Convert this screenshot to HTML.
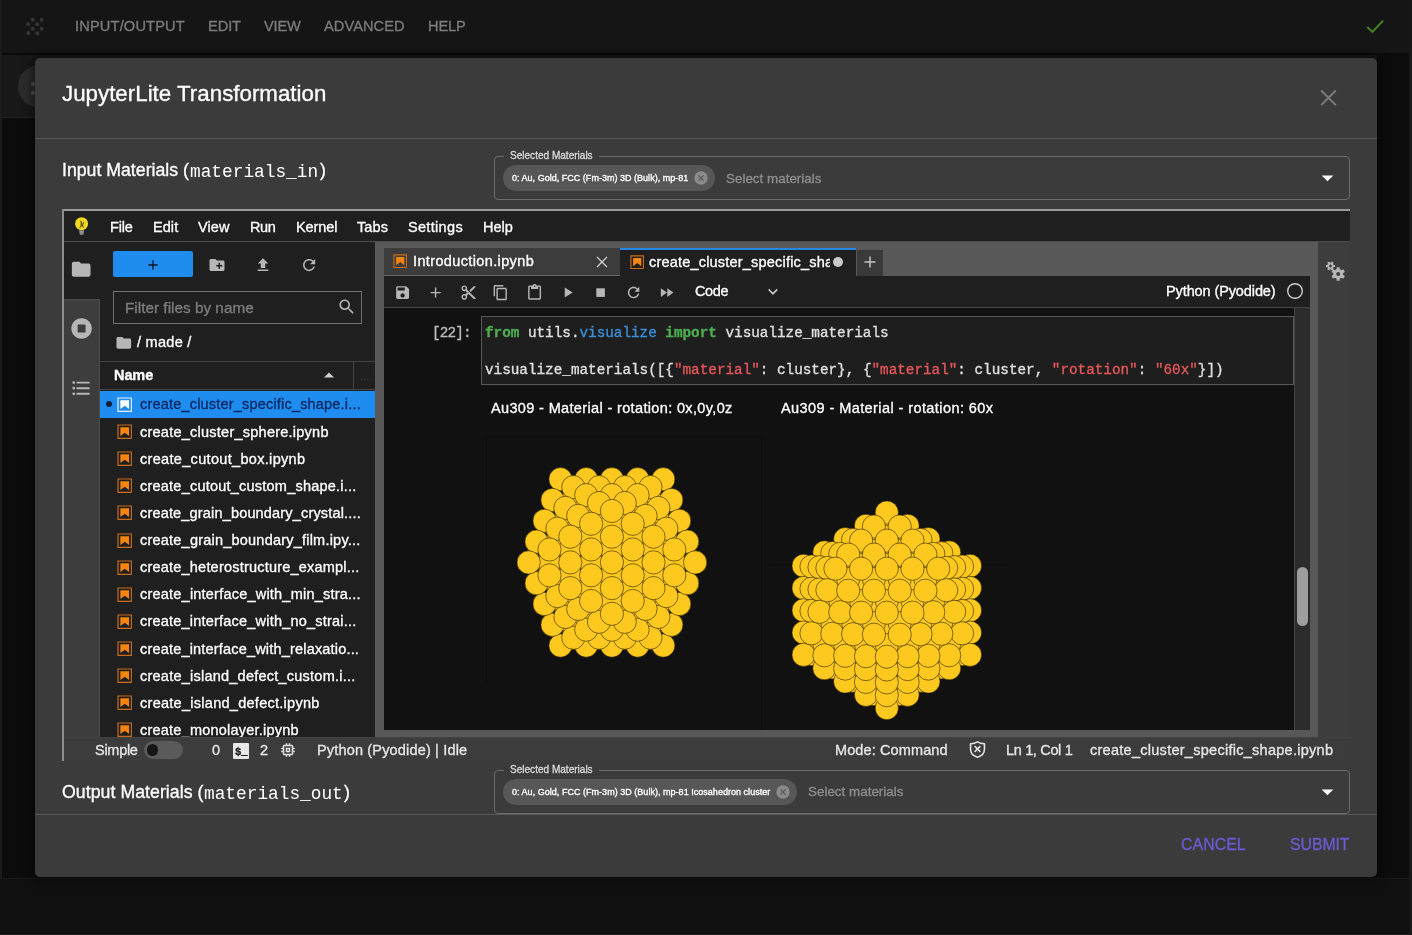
<!DOCTYPE html>
<html><head><meta charset="utf-8"><title>JupyterLite Transformation</title>
<style>
*{box-sizing:border-box;margin:0;padding:0}
html,body{width:1412px;height:935px;overflow:hidden;background:#0c0c0c;font-family:"Liberation Sans",sans-serif}
.a{position:absolute}
.t{position:absolute;white-space:pre;line-height:1;will-change:transform;-webkit-text-stroke:.32px}
svg{position:absolute;overflow:visible}
.au circle{fill:#fdc91f;stroke:#1a1400;stroke-width:.55}

</style></head><body>
<div class="a" style="left:0;top:0;width:1412px;height:53px;background:#151515"></div>
<div class="a" style="left:0;top:53px;width:1412px;height:2px;background:#0a0a0a"></div>
<div class="a" style="left:0;top:55px;width:1377px;height:62px;background:#181818"></div>
<div class="a" style="left:0;top:117px;width:36px;height:1px;background:#232323"></div>
<div class="a" style="left:0;top:0;width:1.500px;height:935px;background:#1b1b1b"></div>
<div class="a" style="left:0;top:878px;width:1412px;height:57px;background:#101010;border-top:1px solid #191919;border-bottom:1px solid #1e1e1e"></div>
<div class="a" style="left:1409px;top:0;width:3px;height:935px;background:#181818"></div>
<div class="a" style="left:18px;top:65px;width:43px;height:43px;border-radius:50%;background:#2b2b2b"></div>
<div class="a" style="left:31px;top:82px;width:4px;height:4px;border-radius:50%;background:#555"></div>
<div class="a" style="left:31px;top:91px;width:4px;height:4px;border-radius:50%;background:#555"></div>
<svg style="left:0;top:0" width="60" height="53"><circle cx="32.7" cy="19.7" r="2" fill="#363636"/><circle cx="41.7" cy="19.7" r="2" fill="#363636"/><circle cx="28.3" cy="24.2" r="2" fill="#363636"/><circle cx="37.1" cy="24.2" r="2" fill="#363636"/><circle cx="32.7" cy="28.8" r="2" fill="#363636"/><circle cx="41.7" cy="28.8" r="2" fill="#363636"/><circle cx="28.3" cy="33" r="2" fill="#363636"/><circle cx="37.3" cy="33.2" r="2" fill="#363636"/></svg>
<div class="t" style="left:74.8px;top:18.9px;font-size:14.6px;color:#7c7c7c;letter-spacing:0.170px;">INPUT/OUTPUT</div>
<div class="t" style="left:207.7px;top:18.9px;font-size:14.6px;color:#7c7c7c;letter-spacing:-0.071px;">EDIT</div>
<div class="t" style="left:264.1px;top:18.9px;font-size:14.6px;color:#7c7c7c;letter-spacing:-0.142px;">VIEW</div>
<div class="t" style="left:324.0px;top:18.9px;font-size:14.6px;color:#7c7c7c;letter-spacing:0.078px;">ADVANCED</div>
<div class="t" style="left:427.7px;top:18.9px;font-size:14.6px;color:#7c7c7c;letter-spacing:-0.121px;">HELP</div>
<svg style="left:1360px;top:14px" width="30" height="24"><path d="M7.3 13 L12.4 17.9 L23.1 6.6" fill="none" stroke="#41851f" stroke-width="2"/></svg>
<div class="a" style="left:35px;top:58px;width:1342px;height:819px;background:#3b3b3b;border-radius:5px;box-shadow:0 0 10px 3px rgba(0,0,0,.5)"></div>
<div class="a" style="left:35px;top:138px;width:1342px;height:1px;background:#565656"></div>
<div class="a" style="left:35px;top:814px;width:1342px;height:1px;background:#565656"></div>
<div class="t" style="left:61.6px;top:83.1px;font-size:22.3px;color:#fff;letter-spacing:0.016px;">JupyterLite Transformation</div>
<svg style="left:1318px;top:88px" width="20" height="20"><path d="M3.2 2.5 L17.8 17.1 M17.8 2.5 L3.2 17.1" fill="none" stroke="#7b7b7b" stroke-width="2"/></svg>
<div class="t" style="left:1180.5px;top:836.8px;font-size:15.8px;color:#6b5bd2;letter-spacing:0.110px;">CANCEL</div>
<div class="t" style="left:1290.0px;top:836.8px;font-size:15.8px;color:#6b5bd2;letter-spacing:-0.034px;">SUBMIT</div>
<div class="a" style="left:494px;top:156px;width:856px;height:44px;border:1px solid #6c6c6c;border-radius:4px"></div>
<div class="a" style="left:504px;top:154px;width:95px;height:5px;background:#3b3b3b"></div>
<div class="t" style="left:509.6px;top:150.7px;font-size:10.05px;color:#d9d9d9;">Selected Materials</div>
<div class="a" style="left:503px;top:165px;width:212px;height:26px;border-radius:13px;background:#575757"></div>
<div class="t" style="left:511.7px;top:173.8px;font-size:9px;color:#fff;letter-spacing:0.019px;">0: Au, Gold, FCC (Fm-3m) 3D (Bulk), mp-81</div>
<svg style="left:694.4px;top:171px" width="14" height="14"><circle cx="7" cy="7" r="6.7" fill="#8b8b8b"/><path d="M4.4 4.4 L9.6 9.6 M9.6 4.4 L4.4 9.6" stroke="#575757" stroke-width="1.3" fill="none"/></svg>
<div class="t" style="left:726.0px;top:171.7px;font-size:13.3px;color:#8f8f8f;letter-spacing:0.058px;">Select materials</div>
<svg style="left:1321px;top:175px" width="13" height="7"><path d="M0.7 0.4 L12.3 0.4 L6.5 6.2 Z" fill="#fff"/></svg>
<div class="t" style="left:62.4px;top:162.1px;font-size:17.7px;color:#fff;letter-spacing:0.005px;">Input Materials (</div>
<div class="t" style="left:190.3px;top:164.2px;font-size:17.75px;color:#fff;font-family:'Liberation Mono',monospace;letter-spacing:0.032px;-webkit-text-stroke:0;">materials_in</div>
<div class="t" style="left:319.7px;top:162.1px;font-size:17.7px;color:#fff;">)</div>
<div class="a" style="left:494px;top:770px;width:856px;height:44px;border:1px solid #6c6c6c;border-radius:4px"></div>
<div class="a" style="left:504px;top:768px;width:95px;height:5px;background:#3b3b3b"></div>
<div class="t" style="left:509.6px;top:764.7px;font-size:10.05px;color:#d9d9d9;">Selected Materials</div>
<div class="a" style="left:503px;top:779px;width:294.20000000000005px;height:26px;border-radius:13px;background:#575757"></div>
<div class="t" style="left:511.7px;top:787.8px;font-size:9px;color:#fff;letter-spacing:0.028px;">0: Au, Gold, FCC (Fm-3m) 3D (Bulk), mp-81 Icosahedron cluster</div>
<svg style="left:776.2px;top:785px" width="14" height="14"><circle cx="7" cy="7" r="6.7" fill="#8b8b8b"/><path d="M4.4 4.4 L9.6 9.6 M9.6 4.4 L4.4 9.6" stroke="#575757" stroke-width="1.3" fill="none"/></svg>
<div class="t" style="left:807.7px;top:785.0px;font-size:13.3px;color:#8f8f8f;letter-spacing:0.058px;">Select materials</div>
<svg style="left:1321px;top:789px" width="13" height="7"><path d="M0.7 0.4 L12.3 0.4 L6.5 6.2 Z" fill="#fff"/></svg>
<div class="t" style="left:61.8px;top:783.7px;font-size:17.7px;color:#fff;letter-spacing:0.053px;">Output Materials (</div>
<div class="t" style="left:204.1px;top:785.8px;font-size:17.75px;color:#fff;font-family:'Liberation Mono',monospace;letter-spacing:0.025px;-webkit-text-stroke:0;">materials_out</div>
<div class="t" style="left:344.1px;top:783.7px;font-size:17.7px;color:#fff;">)</div>
<div class="a" style="left:62px;top:209px;width:1288px;height:2px;background:#9a9a9a;"></div>
<div class="a" style="left:62px;top:209px;width:2px;height:552px;background:#8c8c8c;"></div>
<div class="a" style="left:64px;top:211px;width:1286px;height:30px;background:#1f1f1f;"></div>
<div class="a" style="left:64px;top:241px;width:1286px;height:1px;background:#4d4d4d;"></div>
<div class="a" style="left:64px;top:242px;width:36px;height:495px;background:#3d3d3d;"></div>
<div class="a" style="left:64px;top:242px;width:36px;height:57px;background:#1f1f1f;"></div>
<div class="a" style="left:64px;top:299px;width:36px;height:1px;background:#4c4c4c;"></div>
<div class="a" style="left:99px;top:300px;width:1px;height:437px;background:#4c4c4c;"></div>
<div class="a" style="left:100px;top:242px;width:275px;height:495px;background:#1f1f1f;"></div>
<div class="a" style="left:375px;top:242px;width:943px;height:495px;background:#585858;"></div>
<div class="a" style="left:1318px;top:242px;width:32px;height:495px;background:#3d3d3d;"></div>
<div class="a" style="left:64px;top:737px;width:1286px;height:24px;background:#3c3c3c;border-top:1px solid #424242"></div>
<div class="t" style="left:110.3px;top:220.1px;font-size:14.5px;color:#fff;letter-spacing:-0.164px;">File</div>
<div class="t" style="left:153.1px;top:220.1px;font-size:14.5px;color:#fff;letter-spacing:0.057px;">Edit</div>
<div class="t" style="left:198.4px;top:220.1px;font-size:14.5px;color:#fff;letter-spacing:0.122px;">View</div>
<div class="t" style="left:250.0px;top:220.1px;font-size:14.5px;color:#fff;letter-spacing:-0.444px;">Run</div>
<div class="t" style="left:295.6px;top:220.1px;font-size:14.5px;color:#fff;letter-spacing:-0.095px;">Kernel</div>
<div class="t" style="left:357.4px;top:220.1px;font-size:14.5px;color:#fff;letter-spacing:0.103px;">Tabs</div>
<div class="t" style="left:408.4px;top:220.1px;font-size:14.5px;color:#fff;letter-spacing:0.319px;">Settings</div>
<div class="t" style="left:483.2px;top:220.1px;font-size:14.5px;color:#fff;letter-spacing:0.021px;">Help</div>
<svg style="left:72px;top:214px" width="20" height="24"><path d="M7 16.300 H12.200 L11.400 20.800 H7.800 Z" fill="#8e8e8e"/><circle cx="9.600" cy="9.700" r="6.500" fill="#efd81d"/><path d="M8.300 7.200 l1 .3 -0.200 4.900 -1.600 1.400 M11.500 8.200 l-1.200 3.800 1.700 1.500" stroke="#3a2e00" stroke-width="1" fill="none"/></svg>
<svg style="left:70.3px;top:258.0px" width="22.4" height="22.4" viewBox="0 0 24 24" ><path d="M10 4H4c-1.1 0-1.99.9-1.99 2L2 18c0 1.1.9 2 2 2h16c1.1 0 2-.9 2-2V8c0-1.1-.9-2-2-2h-8l-2-2z" fill="#b6b6b6"/></svg>
<svg style="left:70.9px;top:318.1px" width="21.2" height="21.2" viewBox="0 0 512 512" ><path fill="#b6b6b6" d="M256 8C119 8 8 119 8 256s111 248 248 248 248-111 248-248S393 8 256 8zm96 328c0 8.800-7.200 16-16 16H176c-8.800 0-16-7.200-16-16V176c0-8.800 7.200-16 16-16h160c8.800 0 16 7.200 16 16v160z"/></svg>
<svg style="left:70.2px;top:376.7px" width="22.4" height="22.4" viewBox="0 0 24 24" ><path fill="#b6b6b6" d="M7,5H21V7H7V5M7,13V11H21V13H7M4,4.500A1.500,1.500 0 0,1 5.500,6A1.500,1.500 0 0,1 4,7.500A1.500,1.500 0 0,1 2.500,6A1.500,1.500 0 0,1 4,4.500M4,10.500A1.500,1.500 0 0,1 5.500,12A1.500,1.500 0 0,1 4,13.500A1.500,1.500 0 0,1 2.500,12A1.500,1.500 0 0,1 4,10.500M7,19V17H21V19H7M4,16.500A1.500,1.500 0 0,1 5.500,18A1.500,1.500 0 0,1 4,19.500A1.500,1.500 0 0,1 2.500,18A1.500,1.500 0 0,1 4,16.500Z"/></svg>
<div class="a" style="left:113px;top:251px;width:80px;height:26px;background:#1f8cf0;border-radius:2px"></div>
<svg style="left:145.1px;top:256.8px" width="16" height="16" viewBox="0 0 24 24" ><path d="M19 13h-6v6h-2v-6H5v-2h6V5h2v6h6v2z" fill="#101820"/></svg>
<svg style="left:208.2px;top:255.8px" width="18" height="18" viewBox="0 0 24 24" ><path fill="#b6b6b6" d="M20 6h-8l-2-2H4c-1.110 0-1.990.890-1.990 2L2 18c0 1.110.890 2 2 2h16c1.110 0 2-.890 2-2V8c0-1.110-.890-2-2-2zm-1 8h-3v3h-2v-3h-3v-2h3V9h2v3h3v2z"/></svg>
<svg style="left:253.9px;top:256.1px" width="18" height="18" viewBox="0 0 24 24" ><path fill="#b6b6b6" d="M9 16h6v-6h4l-7-7-7 7h4zm-4 2h14v2H5z"/></svg>
<svg style="left:300.1px;top:255.7px" width="18.2" height="18.2" viewBox="0 0 24 24" ><path fill="#b6b6b6" d="M17.650 6.350C16.200 4.900 14.210 4 12 4c-4.420 0-7.990 3.580-7.990 8s3.570 8 7.990 8c3.730 0 6.840-2.550 7.730-6h-2.080c-.820 2.330-3.040 4-5.650 4-3.310 0-6-2.690-6-6s2.690-6 6-6c1.660 0 3.140.690 4.220 1.780L13 11h7V4l-2.350 2.350z"/></svg>
<div class="a" style="left:113px;top:291px;width:249px;height:33px;border:1px solid #727272;background:#1f1f1f"></div>
<div class="t" style="left:124.6px;top:300.0px;font-size:15.3px;color:#7d7d7d;letter-spacing:0.017px;">Filter files by name</div>
<svg style="left:337.1px;top:297.4px" width="19.5" height="19.5" viewBox="0 0 24 24" ><path fill="#b6b6b6" d="M15.500 14h-.790l-.280-.270C15.410 12.590 16 11.110 16 9.500 16 5.910 13.090 3 9.500 3S3 5.910 3 9.500 5.910 16 9.500 16c1.610 0 3.090-.590 4.230-1.570l.270.280v.790l5 4.990L20.490 19l-4.990-5zm-6 0C7.010 14 5 11.990 5 9.500S7.010 5 9.500 5 14 7.010 14 9.500 11.990 14 9.500 14z"/></svg>
<svg style="left:115.2px;top:333.8px" width="17.6" height="17.6" viewBox="0 0 24 24" ><path d="M10 4H4c-1.1 0-1.99.9-1.99 2L2 18c0 1.1.9 2 2 2h16c1.1 0 2-.9 2-2V8c0-1.1-.9-2-2-2h-8l-2-2z" fill="#b6b6b6"/></svg>
<div class="t" style="left:137.3px;top:335.1px;font-size:14.5px;color:#fff;letter-spacing:0.281px;">/ made /</div>
<div class="a" style="left:100px;top:361px;width:275px;height:1px;background:#434343;"></div>
<div class="a" style="left:100px;top:389px;width:275px;height:1px;background:#434343;"></div>
<div class="a" style="left:353px;top:362px;width:1px;height:27px;background:#434343;"></div>
<div class="t" style="left:113.9px;top:368.3px;font-size:14.5px;color:#fff;font-weight:700;letter-spacing:-0.086px;">Name</div>
<svg style="left:323px;top:371px" width="12" height="8"><path d="M1 6.600 L6 1.600 L11 6.600 Z" fill="#d0d0d0"/></svg>
<div class="t" style="left:360.0px;top:369.9px;font-size:12px;color:#313131;letter-spacing:-0.206px;">...</div>
<div class="a" style="left:100px;top:391px;width:275px;height:27px;background:#1f8cf0;"></div>
<div class="a" style="left:105.7px;top:401.400px;width:6px;height:6px;border-radius:50%;background:#0b1f3d"></div>
<div class="a" style="left:100px;top:391px;width:275px;height:346px;overflow:hidden">
<svg style="left:15.9px;top:4.9px" width="17.400" height="17.400" viewBox="0 0 22 22"><path fill="#e8f2ff" d="M18.700 3.300v15.400H3.300V3.300h15.400m1.500-1.500H1.800v18.300h18.300l.1-18.300z"/><path fill="#fff" d="M16.500 16.500l-5.400-4.300-5.600 4.300v-11h11z"/></svg>
<div class="t" style="left:40.0px;top:6.4px;font-size:14.5px;color:#0b2963;letter-spacing:0.191px;">create_cluster_specific_shape.i...</div>
<svg style="left:15.9px;top:32.0px" width="17.400" height="17.400" viewBox="0 0 22 22"><path fill="#c96d1c" d="M18.700 3.300v15.400H3.300V3.300h15.400m1.500-1.500H1.800v18.300h18.300l.1-18.300z"/><path fill="#f58410" d="M16.500 16.500l-5.400-4.300-5.600 4.300v-11h11z"/></svg>
<div class="t" style="left:40.0px;top:33.5px;font-size:14.5px;color:#fff;letter-spacing:0.243px;">create_cluster_sphere.ipynb</div>
<svg style="left:15.9px;top:59.1px" width="17.400" height="17.400" viewBox="0 0 22 22"><path fill="#c96d1c" d="M18.700 3.300v15.400H3.300V3.300h15.400m1.500-1.500H1.800v18.300h18.300l.1-18.300z"/><path fill="#f58410" d="M16.500 16.500l-5.400-4.300-5.600 4.300v-11h11z"/></svg>
<div class="t" style="left:40.0px;top:60.7px;font-size:14.5px;color:#fff;letter-spacing:0.320px;">create_cutout_box.ipynb</div>
<svg style="left:15.9px;top:86.3px" width="17.400" height="17.400" viewBox="0 0 22 22"><path fill="#c96d1c" d="M18.700 3.300v15.400H3.300V3.300h15.400m1.500-1.500H1.800v18.300h18.300l.1-18.300z"/><path fill="#f58410" d="M16.500 16.500l-5.400-4.300-5.600 4.300v-11h11z"/></svg>
<div class="t" style="left:40.0px;top:87.8px;font-size:14.5px;color:#fff;letter-spacing:0.224px;">create_cutout_custom_shape.i...</div>
<svg style="left:15.9px;top:113.4px" width="17.400" height="17.400" viewBox="0 0 22 22"><path fill="#c96d1c" d="M18.700 3.300v15.400H3.300V3.300h15.400m1.500-1.500H1.800v18.300h18.300l.1-18.300z"/><path fill="#f58410" d="M16.500 16.500l-5.400-4.300-5.600 4.300v-11h11z"/></svg>
<div class="t" style="left:40.0px;top:114.9px;font-size:14.5px;color:#fff;letter-spacing:0.172px;">create_grain_boundary_crystal....</div>
<svg style="left:15.9px;top:140.5px" width="17.400" height="17.400" viewBox="0 0 22 22"><path fill="#c96d1c" d="M18.700 3.300v15.400H3.300V3.300h15.400m1.500-1.500H1.800v18.300h18.300l.1-18.300z"/><path fill="#f58410" d="M16.500 16.500l-5.400-4.300-5.600 4.300v-11h11z"/></svg>
<div class="t" style="left:40.0px;top:142.0px;font-size:14.5px;color:#fff;letter-spacing:0.218px;">create_grain_boundary_film.ipy...</div>
<svg style="left:15.9px;top:167.6px" width="17.400" height="17.400" viewBox="0 0 22 22"><path fill="#c96d1c" d="M18.700 3.300v15.400H3.300V3.300h15.400m1.500-1.500H1.800v18.300h18.300l.1-18.300z"/><path fill="#f58410" d="M16.500 16.500l-5.400-4.300-5.600 4.300v-11h11z"/></svg>
<div class="t" style="left:40.0px;top:169.1px;font-size:14.5px;color:#fff;letter-spacing:0.210px;">create_heterostructure_exampl...</div>
<svg style="left:15.9px;top:194.7px" width="17.400" height="17.400" viewBox="0 0 22 22"><path fill="#c96d1c" d="M18.700 3.300v15.400H3.300V3.300h15.400m1.500-1.500H1.800v18.300h18.300l.1-18.300z"/><path fill="#f58410" d="M16.500 16.500l-5.400-4.300-5.600 4.300v-11h11z"/></svg>
<div class="t" style="left:40.0px;top:196.3px;font-size:14.5px;color:#fff;letter-spacing:0.216px;">create_interface_with_min_stra...</div>
<svg style="left:15.9px;top:221.9px" width="17.400" height="17.400" viewBox="0 0 22 22"><path fill="#c96d1c" d="M18.700 3.300v15.400H3.300V3.300h15.400m1.500-1.500H1.800v18.300h18.300l.1-18.300z"/><path fill="#f58410" d="M16.500 16.500l-5.400-4.300-5.600 4.300v-11h11z"/></svg>
<div class="t" style="left:40.0px;top:223.4px;font-size:14.5px;color:#fff;letter-spacing:0.210px;">create_interface_with_no_strai...</div>
<svg style="left:15.9px;top:249.0px" width="17.400" height="17.400" viewBox="0 0 22 22"><path fill="#c96d1c" d="M18.700 3.300v15.400H3.300V3.300h15.400m1.500-1.500H1.800v18.300h18.300l.1-18.300z"/><path fill="#f58410" d="M16.500 16.500l-5.400-4.300-5.600 4.300v-11h11z"/></svg>
<div class="t" style="left:40.0px;top:250.5px;font-size:14.5px;color:#fff;letter-spacing:0.185px;">create_interface_with_relaxatio...</div>
<svg style="left:15.9px;top:276.1px" width="17.400" height="17.400" viewBox="0 0 22 22"><path fill="#c96d1c" d="M18.700 3.300v15.400H3.300V3.300h15.400m1.500-1.500H1.800v18.300h18.300l.1-18.300z"/><path fill="#f58410" d="M16.500 16.500l-5.400-4.300-5.600 4.300v-11h11z"/></svg>
<div class="t" style="left:40.0px;top:277.6px;font-size:14.5px;color:#fff;letter-spacing:0.236px;">create_island_defect_custom.i...</div>
<svg style="left:15.9px;top:303.2px" width="17.400" height="17.400" viewBox="0 0 22 22"><path fill="#c96d1c" d="M18.700 3.300v15.400H3.300V3.300h15.400m1.500-1.500H1.800v18.300h18.300l.1-18.300z"/><path fill="#f58410" d="M16.500 16.500l-5.400-4.300-5.600 4.300v-11h11z"/></svg>
<div class="t" style="left:40.0px;top:304.7px;font-size:14.5px;color:#fff;letter-spacing:0.274px;">create_island_defect.ipynb</div>
<svg style="left:15.9px;top:330.3px" width="17.400" height="17.400" viewBox="0 0 22 22"><path fill="#c96d1c" d="M18.700 3.300v15.400H3.300V3.300h15.400m1.500-1.500H1.800v18.300h18.300l.1-18.300z"/><path fill="#f58410" d="M16.500 16.500l-5.400-4.300-5.600 4.300v-11h11z"/></svg>
<div class="t" style="left:40.0px;top:331.9px;font-size:14.5px;color:#fff;letter-spacing:0.220px;">create_monolayer.ipynb</div>
</div>
<div class="a" style="left:384px;top:248px;width:236px;height:28px;background:#3c3c3c;border-bottom:1px solid #6a6a6a"></div>
<div class="a" style="left:620px;top:248px;width:236px;height:28px;background:#1f1f1f;"></div>
<div class="a" style="left:620px;top:248px;width:236px;height:2px;background:#2489e6;"></div>
<div class="a" style="left:856.5px;top:249.5px;width:26.5px;height:26.5px;background:#3a3a3a;"></div>
<svg style="left:392px;top:253px" width="16.400" height="16.400" viewBox="0 0 22 22"><path fill="#c96d1c" d="M18.700 3.300v15.400H3.300V3.300h15.400m1.500-1.500H1.800v18.300h18.300l.1-18.300z"/><path fill="#f58410" d="M16.500 16.500l-5.400-4.300-5.600 4.300v-11h11z"/></svg>
<div class="t" style="left:412.7px;top:254.3px;font-size:14.5px;color:#fff;letter-spacing:0.368px;">Introduction.ipynb</div>
<svg style="left:596px;top:255.500px" width="12" height="12"><path d="M1 1 L11 11 M11 1 L1 11" stroke="#d0d0d0" stroke-width="1.300" fill="none"/></svg>
<svg style="left:628.800px;top:253.600px" width="16.400" height="16.400" viewBox="0 0 22 22"><path fill="#c96d1c" d="M18.700 3.300v15.400H3.300V3.300h15.400m1.500-1.500H1.800v18.300h18.300l.1-18.300z"/><path fill="#f58410" d="M16.500 16.500l-5.400-4.300-5.600 4.300v-11h11z"/></svg>
<div class="a" style="left:649px;top:250px;width:181px;height:25px;overflow:hidden"><div class="t" style="left:0.3px;top:5.4px;font-size:14.5px;color:#fff;letter-spacing:0.196px;">create_cluster_specific_shape.ipynb</div></div>
<div class="a" style="left:833.400px;top:257.200px;width:10px;height:10px;border-radius:50%;background:#c9c9c9"></div>
<svg style="left:864px;top:256px" width="12" height="12"><path d="M6 0.500 V11.500 M0.500 6 H11.500" stroke="#c4c4c4" stroke-width="1.500" fill="none"/></svg>
<div class="a" style="left:384px;top:276px;width:926px;height:31px;background:#1f1f1f;"></div>
<div class="a" style="left:384px;top:307px;width:926px;height:1px;background:#454545;"></div>
<svg style="left:393.8px;top:283.5px" width="17.2" height="17.2" viewBox="0 0 24 24" ><path fill="#b6b6b6" d="M17 3H5c-1.110 0-2 .900-2 2v14c0 1.100.890 2 2 2h14c1.100 0 2-.900 2-2V7l-4-4zm-5 16c-1.660 0-3-1.340-3-3s1.340-3 3-3 3 1.340 3 3-1.340 3-3 3zm3-10H5V5h10v4z"/></svg>
<svg style="left:426.7px;top:283.5px" width="17.2" height="17.2" viewBox="0 0 24 24" ><path fill="#b6b6b6" d="M19 13h-6v6h-2v-6H5v-2h6V5h2v6h6v2z"/></svg>
<svg style="left:459.6px;top:283.5px" width="17.2" height="17.2" viewBox="0 0 24 24" ><path fill="#b6b6b6" d="M9.640 7.640c.230-.500.360-1.050.360-1.640 0-2.210-1.790-4-4-4S2 3.790 2 6s1.790 4 4 4c.590 0 1.140-.130 1.640-.360L10 12l-2.360 2.360C7.140 14.130 6.590 14 6 14c-2.210 0-4 1.790-4 4s1.790 4 4 4 4-1.790 4-4c0-.590-.130-1.140-.360-1.640L12 14l7 7h3v-1L9.640 7.640zM6 8c-1.100 0-2-.890-2-2s.900-2 2-2 2 .890 2 2-.900 2-2 2zm0 12c-1.100 0-2-.890-2-2s.900-2 2-2 2 .890 2 2-.900 2-2 2zm6-7.500c-.280 0-.500-.220-.500-.500s.220-.500.500-.500.500.220.500.500-.220.500-.500.500zM19 3l-6 6 2 2 7-7V3z"/></svg>
<svg style="left:492.3px;top:283.5px" width="17.2" height="17.2" viewBox="0 0 18 18" ><path fill="#b6b6b6" d="M11.900,1H3.200C2.400,1,1.700,1.700,1.700,2.500v10.200h1.500V2.500h8.700V1z M14.100,3.900h-8c-0.800,0-1.500,0.700-1.500,1.500v10.200c0,0.800,0.700,1.500,1.500,1.500h8 c0.800,0,1.500-0.700,1.500-1.500V5.400C15.500,4.600,14.900,3.900,14.100,3.900z M14.100,15.500h-8V5.400h8V15.500z"/></svg>
<svg style="left:525.6px;top:283.5px" width="17.2" height="17.2" viewBox="0 0 24 24" ><path fill="#b6b6b6" d="M19 2h-4.180C14.400.840 13.300 0 12 0c-1.300 0-2.400.840-2.820 2H5c-1.100 0-2 .900-2 2v16c0 1.100.900 2 2 2h14c1.100 0 2-.900 2-2V4c0-1.100-.900-2-2-2zm-7 0c.550 0 1 .450 1 1s-.450 1-1 1-1-.450-1-1 .450-1 1-1zm7 18H5V4h2v3h10V4h2v16z"/></svg>
<svg style="left:559.1px;top:283.5px" width="17.2" height="17.2" viewBox="0 0 24 24" ><path fill="#b6b6b6" d="M8 5v14l11-7z"/></svg>
<svg style="left:591.9px;top:283.5px" width="17.2" height="17.2" viewBox="0 0 24 24" ><path fill="#b6b6b6" d="M6 6h12v12H6z"/></svg>
<svg style="left:625.0px;top:283.5px" width="17.2" height="17.2" viewBox="0 0 18 18" ><path fill="#b6b6b6" d="M9 13.500c-2.490 0-4.500-2.010-4.500-4.500S6.510 4.500 9 4.500c1.240 0 2.360.520 3.170 1.330L10 8h5V3l-1.760 1.760C12.150 3.680 10.660 3 9 3 5.690 3 3.010 5.690 3.010 9S5.690 15 9 15c2.970 0 5.430-2.160 5.900-5h-1.520c-.460 2-2.240 3.500-4.380 3.500z"/></svg>
<svg style="left:657.9px;top:283.5px" width="17.2" height="17.2" viewBox="0 0 24 24" ><path fill="#b6b6b6" d="M4 18l8.500-6L4 6v12zm9-12v12l8.500-6L13 6z"/></svg>
<div class="t" style="left:695.3px;top:284.3px;font-size:14.5px;color:#fff;letter-spacing:-0.392px;">Code</div>
<svg style="left:764.2px;top:282.9px" width="17.8" height="17.8" viewBox="0 0 18 18" ><path fill="#c4c4c4" d="M5.200,5.900L9,9.700l3.800-3.800l1.200,1.200l-4.900,5l-4.900-5L5.200,5.900z"/></svg>
<div class="t" style="left:1165.7px;top:284.3px;font-size:14.5px;color:#fff;letter-spacing:-0.105px;">Python (Pyodide)</div>
<svg style="left:1286px;top:282px" width="18" height="18"><circle cx="9" cy="9" r="7.300" fill="none" stroke="#cfcfcf" stroke-width="1.400"/></svg>
<div class="a" style="left:384px;top:308px;width:910px;height:422px;background:#111;"></div>
<div class="a" style="left:1294px;top:308px;width:16px;height:422px;background:#2c2c2c;border-left:1px solid #444"></div>
<div class="a" style="left:1297px;top:567px;width:11px;height:58.5px;background:#9e9e9e;border-radius:5.500px"></div>
<div class="a" style="left:480.500px;top:316px;width:813.500px;height:69px;border:1px solid #585858;background:#1e1e1e"></div>
<div class="t" style="left:431.9px;top:326.0px;font-size:14.3px;color:#bdbdbd;font-family:'Liberation Mono',monospace;letter-spacing:-0.801px;">[22]:</div>
<div class="t" style="left:485.4px;top:326.0px;font-size:14.3px;color:#e0e0e0;font-family:'Liberation Mono',monospace;letter-spacing:0.007px;"><b style="color:#4caf50">from</b> utils.<span style="color:#3b8fdc">visualize</span> <b style="color:#4caf50">import</b> visualize_materials</div>
<div class="t" style="left:485.4px;top:363.0px;font-size:14.3px;color:#e0e0e0;font-family:'Liberation Mono',monospace;letter-spacing:0.008px;">visualize_materials([{<span style="color:#e8575a">&quot;material&quot;</span>: cluster}, {<span style="color:#e8575a">&quot;material&quot;</span>: cluster, <span style="color:#e8575a">&quot;rotation&quot;</span>: <span style="color:#e8575a">&quot;60x&quot;</span>}])</div>
<div class="t" style="left:490.8px;top:401.1px;font-size:14.5px;color:#fff;letter-spacing:0.353px;">Au309 - Material - rotation: 0x,0y,0z</div>
<div class="t" style="left:780.8px;top:401.1px;font-size:14.5px;color:#fff;letter-spacing:0.417px;">Au309 - Material - rotation: 60x</div>
<div class="a" style="left:486px;top:437px;width:1px;height:245px;background:#0a0a0a;"></div>
<div class="a" style="left:486px;top:437px;width:276px;height:1px;background:#0b0b0b;"></div>
<div class="a" style="left:761px;top:437px;width:1px;height:293px;background:#0a0a0a;"></div>
<div class="a" style="left:769px;top:564px;width:237px;height:1px;background:#0c0c0c;"></div>
<svg class="au" style="left:0;top:0" width="1412" height="935"><circle cx="611.9" cy="511.0" r="11.6"/><circle cx="611.9" cy="613.8" r="11.6"/><circle cx="611.9" cy="588.1" r="11.6"/><circle cx="611.9" cy="562.4" r="11.6"/><circle cx="611.9" cy="536.7" r="11.6"/><circle cx="632.7" cy="523.8" r="11.6"/><circle cx="632.7" cy="601.0" r="11.6"/><circle cx="632.7" cy="575.3" r="11.6"/><circle cx="632.7" cy="549.5" r="11.6"/><circle cx="591.1" cy="523.8" r="11.6"/><circle cx="591.1" cy="601.0" r="11.6"/><circle cx="591.1" cy="575.3" r="11.6"/><circle cx="591.1" cy="549.5" r="11.6"/><circle cx="653.5" cy="536.7" r="11.6"/><circle cx="653.5" cy="588.1" r="11.6"/><circle cx="653.5" cy="562.4" r="11.6"/><circle cx="570.3" cy="536.7" r="11.6"/><circle cx="570.3" cy="588.1" r="11.6"/><circle cx="570.3" cy="562.4" r="11.6"/><circle cx="611.9" cy="523.8" r="11.6"/><circle cx="611.9" cy="601.0" r="11.6"/><circle cx="611.9" cy="575.3" r="11.6"/><circle cx="611.9" cy="549.5" r="11.6"/><circle cx="624.8" cy="503.0" r="11.6"/><circle cx="624.8" cy="621.8" r="11.6"/><circle cx="599.0" cy="503.0" r="11.6"/><circle cx="599.0" cy="621.8" r="11.6"/><circle cx="674.3" cy="549.5" r="11.6"/><circle cx="674.3" cy="575.3" r="11.6"/><circle cx="549.5" cy="549.5" r="11.6"/><circle cx="549.5" cy="575.3" r="11.6"/><circle cx="632.7" cy="536.7" r="11.6"/><circle cx="632.7" cy="588.1" r="11.6"/><circle cx="632.7" cy="562.4" r="11.6"/><circle cx="591.1" cy="536.7" r="11.6"/><circle cx="591.1" cy="588.1" r="11.6"/><circle cx="591.1" cy="562.4" r="11.6"/><circle cx="645.6" cy="515.9" r="11.6"/><circle cx="645.6" cy="608.9" r="11.6"/><circle cx="578.2" cy="515.9" r="11.6"/><circle cx="578.2" cy="608.9" r="11.6"/><circle cx="695.1" cy="562.4" r="11.6"/><circle cx="528.7" cy="562.4" r="11.6"/><circle cx="653.5" cy="549.5" r="11.6"/><circle cx="653.5" cy="575.3" r="11.6"/><circle cx="570.3" cy="549.5" r="11.6"/><circle cx="570.3" cy="575.3" r="11.6"/><circle cx="666.4" cy="528.7" r="11.6"/><circle cx="666.4" cy="596.1" r="11.6"/><circle cx="557.4" cy="528.7" r="11.6"/><circle cx="557.4" cy="596.1" r="11.6"/><circle cx="611.9" cy="536.7" r="11.6"/><circle cx="611.9" cy="588.1" r="11.6"/><circle cx="611.9" cy="562.4" r="11.6"/><circle cx="624.8" cy="515.9" r="11.6"/><circle cx="624.8" cy="608.9" r="11.6"/><circle cx="599.0" cy="515.9" r="11.6"/><circle cx="599.0" cy="608.9" r="11.6"/><circle cx="637.6" cy="495.1" r="11.6"/><circle cx="637.6" cy="629.7" r="11.6"/><circle cx="586.2" cy="495.1" r="11.6"/><circle cx="586.2" cy="629.7" r="11.6"/><circle cx="611.9" cy="495.1" r="11.6"/><circle cx="611.9" cy="629.7" r="11.6"/><circle cx="674.3" cy="562.4" r="11.6"/><circle cx="549.5" cy="562.4" r="11.6"/><circle cx="687.2" cy="541.6" r="11.6"/><circle cx="687.2" cy="583.2" r="11.6"/><circle cx="536.6" cy="541.6" r="11.6"/><circle cx="536.6" cy="583.2" r="11.6"/><circle cx="632.7" cy="549.5" r="11.6"/><circle cx="632.7" cy="575.3" r="11.6"/><circle cx="591.1" cy="549.5" r="11.6"/><circle cx="591.1" cy="575.3" r="11.6"/><circle cx="645.6" cy="528.7" r="11.6"/><circle cx="645.6" cy="596.1" r="11.6"/><circle cx="578.2" cy="528.7" r="11.6"/><circle cx="578.2" cy="596.1" r="11.6"/><circle cx="658.4" cy="507.9" r="11.6"/><circle cx="658.4" cy="616.9" r="11.6"/><circle cx="565.4" cy="507.9" r="11.6"/><circle cx="565.4" cy="616.9" r="11.6"/><circle cx="653.5" cy="562.4" r="11.6"/><circle cx="570.3" cy="562.4" r="11.6"/><circle cx="666.4" cy="541.6" r="11.6"/><circle cx="666.4" cy="583.2" r="11.6"/><circle cx="557.4" cy="541.6" r="11.6"/><circle cx="557.4" cy="583.2" r="11.6"/><circle cx="679.2" cy="520.8" r="11.6"/><circle cx="695.1" cy="562.4" r="11.6"/><circle cx="679.2" cy="604.0" r="11.6"/><circle cx="544.6" cy="520.8" r="11.6"/><circle cx="528.7" cy="562.4" r="11.6"/><circle cx="544.6" cy="604.0" r="11.6"/><circle cx="611.9" cy="549.5" r="11.6"/><circle cx="611.9" cy="575.3" r="11.6"/><circle cx="624.8" cy="528.7" r="11.6"/><circle cx="624.8" cy="596.1" r="11.6"/><circle cx="599.0" cy="528.7" r="11.6"/><circle cx="599.0" cy="596.1" r="11.6"/><circle cx="637.6" cy="507.9" r="11.6"/><circle cx="637.6" cy="616.9" r="11.6"/><circle cx="586.2" cy="507.9" r="11.6"/><circle cx="586.2" cy="616.9" r="11.6"/><circle cx="611.9" cy="507.9" r="11.6"/><circle cx="611.9" cy="616.9" r="11.6"/><circle cx="650.5" cy="487.1" r="11.6"/><circle cx="650.5" cy="637.7" r="11.6"/><circle cx="573.3" cy="487.1" r="11.6"/><circle cx="573.3" cy="637.7" r="11.6"/><circle cx="599.0" cy="487.1" r="11.6"/><circle cx="624.8" cy="487.1" r="11.6"/><circle cx="599.0" cy="637.7" r="11.6"/><circle cx="624.8" cy="637.7" r="11.6"/><circle cx="632.7" cy="562.4" r="11.6"/><circle cx="591.1" cy="562.4" r="11.6"/><circle cx="645.6" cy="541.6" r="11.6"/><circle cx="645.6" cy="583.2" r="11.6"/><circle cx="578.2" cy="541.6" r="11.6"/><circle cx="578.2" cy="583.2" r="11.6"/><circle cx="658.4" cy="520.8" r="11.6"/><circle cx="674.3" cy="562.4" r="11.6"/><circle cx="658.4" cy="604.0" r="11.6"/><circle cx="565.4" cy="520.8" r="11.6"/><circle cx="549.5" cy="562.4" r="11.6"/><circle cx="565.4" cy="604.0" r="11.6"/><circle cx="671.3" cy="500.0" r="11.6"/><circle cx="687.2" cy="541.6" r="11.6"/><circle cx="671.3" cy="624.8" r="11.6"/><circle cx="687.2" cy="583.2" r="11.6"/><circle cx="552.5" cy="500.0" r="11.6"/><circle cx="536.6" cy="541.6" r="11.6"/><circle cx="552.5" cy="624.8" r="11.6"/><circle cx="536.6" cy="583.2" r="11.6"/><circle cx="611.9" cy="562.4" r="11.6"/><circle cx="624.8" cy="541.6" r="11.6"/><circle cx="624.8" cy="583.2" r="11.6"/><circle cx="599.0" cy="541.6" r="11.6"/><circle cx="599.0" cy="583.2" r="11.6"/><circle cx="637.6" cy="520.8" r="11.6"/><circle cx="653.5" cy="562.4" r="11.6"/><circle cx="637.6" cy="604.0" r="11.6"/><circle cx="586.2" cy="520.8" r="11.6"/><circle cx="570.3" cy="562.4" r="11.6"/><circle cx="586.2" cy="604.0" r="11.6"/><circle cx="611.9" cy="520.8" r="11.6"/><circle cx="611.9" cy="604.0" r="11.6"/><circle cx="650.5" cy="500.0" r="11.6"/><circle cx="666.4" cy="541.6" r="11.6"/><circle cx="650.5" cy="624.8" r="11.6"/><circle cx="666.4" cy="583.2" r="11.6"/><circle cx="573.3" cy="500.0" r="11.6"/><circle cx="557.4" cy="541.6" r="11.6"/><circle cx="573.3" cy="624.8" r="11.6"/><circle cx="557.4" cy="583.2" r="11.6"/><circle cx="599.0" cy="500.0" r="11.6"/><circle cx="624.8" cy="500.0" r="11.6"/><circle cx="599.0" cy="624.8" r="11.6"/><circle cx="624.8" cy="624.8" r="11.6"/><circle cx="663.3" cy="479.2" r="11.6"/><circle cx="679.2" cy="520.8" r="11.6"/><circle cx="695.1" cy="562.4" r="11.6"/><circle cx="663.3" cy="645.6" r="11.6"/><circle cx="679.2" cy="604.0" r="11.6"/><circle cx="560.5" cy="479.2" r="11.6"/><circle cx="544.6" cy="520.8" r="11.6"/><circle cx="528.7" cy="562.4" r="11.6"/><circle cx="560.5" cy="645.6" r="11.6"/><circle cx="544.6" cy="604.0" r="11.6"/><circle cx="586.2" cy="479.2" r="11.6"/><circle cx="611.9" cy="479.2" r="11.6"/><circle cx="637.6" cy="479.2" r="11.6"/><circle cx="586.2" cy="645.6" r="11.6"/><circle cx="611.9" cy="645.6" r="11.6"/><circle cx="637.6" cy="645.6" r="11.6"/><circle cx="632.7" cy="562.4" r="11.6"/><circle cx="591.1" cy="562.4" r="11.6"/><circle cx="645.6" cy="541.6" r="11.6"/><circle cx="645.6" cy="583.2" r="11.6"/><circle cx="578.2" cy="541.6" r="11.6"/><circle cx="578.2" cy="583.2" r="11.6"/><circle cx="658.4" cy="520.8" r="11.6"/><circle cx="674.3" cy="562.4" r="11.6"/><circle cx="658.4" cy="604.0" r="11.6"/><circle cx="565.4" cy="520.8" r="11.6"/><circle cx="549.5" cy="562.4" r="11.6"/><circle cx="565.4" cy="604.0" r="11.6"/><circle cx="671.3" cy="500.0" r="11.6"/><circle cx="687.2" cy="541.6" r="11.6"/><circle cx="671.3" cy="624.8" r="11.6"/><circle cx="687.2" cy="583.2" r="11.6"/><circle cx="552.5" cy="500.0" r="11.6"/><circle cx="536.6" cy="541.6" r="11.6"/><circle cx="552.5" cy="624.8" r="11.6"/><circle cx="536.6" cy="583.2" r="11.6"/><circle cx="611.9" cy="549.5" r="11.6"/><circle cx="611.9" cy="575.3" r="11.6"/><circle cx="624.8" cy="528.7" r="11.6"/><circle cx="624.8" cy="596.1" r="11.6"/><circle cx="599.0" cy="528.7" r="11.6"/><circle cx="599.0" cy="596.1" r="11.6"/><circle cx="637.6" cy="507.9" r="11.6"/><circle cx="637.6" cy="616.9" r="11.6"/><circle cx="586.2" cy="507.9" r="11.6"/><circle cx="586.2" cy="616.9" r="11.6"/><circle cx="611.9" cy="507.9" r="11.6"/><circle cx="611.9" cy="616.9" r="11.6"/><circle cx="650.5" cy="487.1" r="11.6"/><circle cx="650.5" cy="637.7" r="11.6"/><circle cx="573.3" cy="487.1" r="11.6"/><circle cx="573.3" cy="637.7" r="11.6"/><circle cx="599.0" cy="487.1" r="11.6"/><circle cx="624.8" cy="487.1" r="11.6"/><circle cx="599.0" cy="637.7" r="11.6"/><circle cx="624.8" cy="637.7" r="11.6"/><circle cx="653.5" cy="562.4" r="11.6"/><circle cx="570.3" cy="562.4" r="11.6"/><circle cx="666.4" cy="541.6" r="11.6"/><circle cx="666.4" cy="583.2" r="11.6"/><circle cx="557.4" cy="541.6" r="11.6"/><circle cx="557.4" cy="583.2" r="11.6"/><circle cx="679.2" cy="520.8" r="11.6"/><circle cx="695.1" cy="562.4" r="11.6"/><circle cx="679.2" cy="604.0" r="11.6"/><circle cx="544.6" cy="520.8" r="11.6"/><circle cx="528.7" cy="562.4" r="11.6"/><circle cx="544.6" cy="604.0" r="11.6"/><circle cx="632.7" cy="549.5" r="11.6"/><circle cx="632.7" cy="575.3" r="11.6"/><circle cx="591.1" cy="549.5" r="11.6"/><circle cx="591.1" cy="575.3" r="11.6"/><circle cx="645.6" cy="528.7" r="11.6"/><circle cx="645.6" cy="596.1" r="11.6"/><circle cx="578.2" cy="528.7" r="11.6"/><circle cx="578.2" cy="596.1" r="11.6"/><circle cx="658.4" cy="507.9" r="11.6"/><circle cx="658.4" cy="616.9" r="11.6"/><circle cx="565.4" cy="507.9" r="11.6"/><circle cx="565.4" cy="616.9" r="11.6"/><circle cx="674.3" cy="562.4" r="11.6"/><circle cx="549.5" cy="562.4" r="11.6"/><circle cx="687.2" cy="541.6" r="11.6"/><circle cx="687.2" cy="583.2" r="11.6"/><circle cx="536.6" cy="541.6" r="11.6"/><circle cx="536.6" cy="583.2" r="11.6"/><circle cx="611.9" cy="536.7" r="11.6"/><circle cx="611.9" cy="588.1" r="11.6"/><circle cx="611.9" cy="562.4" r="11.6"/><circle cx="624.8" cy="515.9" r="11.6"/><circle cx="624.8" cy="608.9" r="11.6"/><circle cx="599.0" cy="515.9" r="11.6"/><circle cx="599.0" cy="608.9" r="11.6"/><circle cx="637.6" cy="495.1" r="11.6"/><circle cx="637.6" cy="629.7" r="11.6"/><circle cx="586.2" cy="495.1" r="11.6"/><circle cx="586.2" cy="629.7" r="11.6"/><circle cx="611.9" cy="495.1" r="11.6"/><circle cx="611.9" cy="629.7" r="11.6"/><circle cx="653.5" cy="549.5" r="11.6"/><circle cx="653.5" cy="575.3" r="11.6"/><circle cx="570.3" cy="549.5" r="11.6"/><circle cx="570.3" cy="575.3" r="11.6"/><circle cx="666.4" cy="528.7" r="11.6"/><circle cx="666.4" cy="596.1" r="11.6"/><circle cx="557.4" cy="528.7" r="11.6"/><circle cx="557.4" cy="596.1" r="11.6"/><circle cx="695.1" cy="562.4" r="11.6"/><circle cx="528.7" cy="562.4" r="11.6"/><circle cx="632.7" cy="536.7" r="11.6"/><circle cx="632.7" cy="588.1" r="11.6"/><circle cx="632.7" cy="562.4" r="11.6"/><circle cx="591.1" cy="536.7" r="11.6"/><circle cx="591.1" cy="588.1" r="11.6"/><circle cx="591.1" cy="562.4" r="11.6"/><circle cx="645.6" cy="515.9" r="11.6"/><circle cx="645.6" cy="608.9" r="11.6"/><circle cx="578.2" cy="515.9" r="11.6"/><circle cx="578.2" cy="608.9" r="11.6"/><circle cx="674.3" cy="549.5" r="11.6"/><circle cx="674.3" cy="575.3" r="11.6"/><circle cx="549.5" cy="549.5" r="11.6"/><circle cx="549.5" cy="575.3" r="11.6"/><circle cx="611.9" cy="523.8" r="11.6"/><circle cx="611.9" cy="601.0" r="11.6"/><circle cx="611.9" cy="575.3" r="11.6"/><circle cx="611.9" cy="549.5" r="11.6"/><circle cx="624.8" cy="503.0" r="11.6"/><circle cx="624.8" cy="621.8" r="11.6"/><circle cx="599.0" cy="503.0" r="11.6"/><circle cx="599.0" cy="621.8" r="11.6"/><circle cx="653.5" cy="536.7" r="11.6"/><circle cx="653.5" cy="588.1" r="11.6"/><circle cx="653.5" cy="562.4" r="11.6"/><circle cx="570.3" cy="536.7" r="11.6"/><circle cx="570.3" cy="588.1" r="11.6"/><circle cx="570.3" cy="562.4" r="11.6"/><circle cx="632.7" cy="523.8" r="11.6"/><circle cx="632.7" cy="601.0" r="11.6"/><circle cx="632.7" cy="575.3" r="11.6"/><circle cx="632.7" cy="549.5" r="11.6"/><circle cx="591.1" cy="523.8" r="11.6"/><circle cx="591.1" cy="601.0" r="11.6"/><circle cx="591.1" cy="575.3" r="11.6"/><circle cx="591.1" cy="549.5" r="11.6"/><circle cx="611.9" cy="511.0" r="11.6"/><circle cx="611.9" cy="613.8" r="11.6"/><circle cx="611.9" cy="588.1" r="11.6"/><circle cx="611.9" cy="562.4" r="11.6"/><circle cx="611.9" cy="536.7" r="11.6"/><circle cx="886.8" cy="563.9" r="11.6"/><circle cx="899.7" cy="585.9" r="11.6"/><circle cx="873.9" cy="585.9" r="11.6"/><circle cx="912.5" cy="607.9" r="11.6"/><circle cx="861.1" cy="607.9" r="11.6"/><circle cx="886.8" cy="607.9" r="11.6"/><circle cx="925.4" cy="629.9" r="11.6"/><circle cx="848.2" cy="629.9" r="11.6"/><circle cx="873.9" cy="629.9" r="11.6"/><circle cx="899.7" cy="629.9" r="11.6"/><circle cx="938.2" cy="651.9" r="11.6"/><circle cx="835.4" cy="651.9" r="11.6"/><circle cx="861.1" cy="651.9" r="11.6"/><circle cx="886.8" cy="651.9" r="11.6"/><circle cx="912.5" cy="651.9" r="11.6"/><circle cx="907.6" cy="564.4" r="11.6"/><circle cx="866.0" cy="564.4" r="11.6"/><circle cx="920.5" cy="586.4" r="11.6"/><circle cx="853.1" cy="586.4" r="11.6"/><circle cx="886.8" cy="575.5" r="11.6"/><circle cx="933.3" cy="608.4" r="11.6"/><circle cx="840.3" cy="608.4" r="11.6"/><circle cx="886.8" cy="551.1" r="11.6"/><circle cx="899.7" cy="597.5" r="11.6"/><circle cx="873.9" cy="597.5" r="11.6"/><circle cx="946.2" cy="630.4" r="11.6"/><circle cx="827.4" cy="630.4" r="11.6"/><circle cx="912.5" cy="619.5" r="11.6"/><circle cx="861.1" cy="619.5" r="11.6"/><circle cx="886.8" cy="619.5" r="11.6"/><circle cx="928.4" cy="564.8" r="11.6"/><circle cx="845.2" cy="564.8" r="11.6"/><circle cx="925.4" cy="666.0" r="11.6"/><circle cx="848.2" cy="666.0" r="11.6"/><circle cx="873.9" cy="666.0" r="11.6"/><circle cx="899.7" cy="666.0" r="11.6"/><circle cx="925.4" cy="641.5" r="11.6"/><circle cx="848.2" cy="641.5" r="11.6"/><circle cx="873.9" cy="641.5" r="11.6"/><circle cx="899.7" cy="641.5" r="11.6"/><circle cx="941.3" cy="586.8" r="11.6"/><circle cx="832.3" cy="586.8" r="11.6"/><circle cx="907.6" cy="576.0" r="11.6"/><circle cx="866.0" cy="576.0" r="11.6"/><circle cx="954.1" cy="608.8" r="11.6"/><circle cx="819.5" cy="608.8" r="11.6"/><circle cx="907.6" cy="551.5" r="11.6"/><circle cx="866.0" cy="551.5" r="11.6"/><circle cx="946.2" cy="652.6" r="11.6"/><circle cx="827.4" cy="652.6" r="11.6"/><circle cx="920.5" cy="598.0" r="11.6"/><circle cx="853.1" cy="598.0" r="11.6"/><circle cx="886.8" cy="587.1" r="11.6"/><circle cx="933.3" cy="620.0" r="11.6"/><circle cx="840.3" cy="620.0" r="11.6"/><circle cx="886.8" cy="562.7" r="11.6"/><circle cx="886.8" cy="538.2" r="11.6"/><circle cx="949.2" cy="565.3" r="11.6"/><circle cx="824.4" cy="565.3" r="11.6"/><circle cx="899.7" cy="609.1" r="11.6"/><circle cx="873.9" cy="609.1" r="11.6"/><circle cx="912.5" cy="680.0" r="11.6"/><circle cx="861.1" cy="680.0" r="11.6"/><circle cx="886.8" cy="680.0" r="11.6"/><circle cx="962.1" cy="587.3" r="11.6"/><circle cx="811.5" cy="587.3" r="11.6"/><circle cx="912.5" cy="655.6" r="11.6"/><circle cx="861.1" cy="655.6" r="11.6"/><circle cx="886.8" cy="655.6" r="11.6"/><circle cx="912.5" cy="631.1" r="11.6"/><circle cx="861.1" cy="631.1" r="11.6"/><circle cx="886.8" cy="631.1" r="11.6"/><circle cx="954.1" cy="631.1" r="11.6"/><circle cx="819.5" cy="631.1" r="11.6"/><circle cx="928.4" cy="576.4" r="11.6"/><circle cx="845.2" cy="576.4" r="11.6"/><circle cx="928.4" cy="552.0" r="11.6"/><circle cx="845.2" cy="552.0" r="11.6"/><circle cx="941.3" cy="598.4" r="11.6"/><circle cx="832.3" cy="598.4" r="11.6"/><circle cx="933.3" cy="666.7" r="11.6"/><circle cx="840.3" cy="666.7" r="11.6"/><circle cx="933.3" cy="642.2" r="11.6"/><circle cx="840.3" cy="642.2" r="11.6"/><circle cx="907.6" cy="587.6" r="11.6"/><circle cx="866.0" cy="587.6" r="11.6"/><circle cx="907.6" cy="563.1" r="11.6"/><circle cx="866.0" cy="563.1" r="11.6"/><circle cx="907.6" cy="538.7" r="11.6"/><circle cx="866.0" cy="538.7" r="11.6"/><circle cx="970.0" cy="565.8" r="11.6"/><circle cx="803.6" cy="565.8" r="11.6"/><circle cx="920.5" cy="609.6" r="11.6"/><circle cx="853.1" cy="609.6" r="11.6"/><circle cx="962.1" cy="609.6" r="11.6"/><circle cx="811.5" cy="609.6" r="11.6"/><circle cx="954.1" cy="653.4" r="11.6"/><circle cx="819.5" cy="653.4" r="11.6"/><circle cx="886.8" cy="598.7" r="11.6"/><circle cx="886.8" cy="574.3" r="11.6"/><circle cx="899.7" cy="694.1" r="11.6"/><circle cx="873.9" cy="694.1" r="11.6"/><circle cx="886.8" cy="549.8" r="11.6"/><circle cx="899.7" cy="669.6" r="11.6"/><circle cx="873.9" cy="669.6" r="11.6"/><circle cx="886.8" cy="525.4" r="11.6"/><circle cx="949.2" cy="576.9" r="11.6"/><circle cx="824.4" cy="576.9" r="11.6"/><circle cx="899.7" cy="645.2" r="11.6"/><circle cx="873.9" cy="645.2" r="11.6"/><circle cx="949.2" cy="552.4" r="11.6"/><circle cx="824.4" cy="552.4" r="11.6"/><circle cx="899.7" cy="620.7" r="11.6"/><circle cx="873.9" cy="620.7" r="11.6"/><circle cx="941.3" cy="620.7" r="11.6"/><circle cx="832.3" cy="620.7" r="11.6"/><circle cx="920.5" cy="680.7" r="11.6"/><circle cx="853.1" cy="680.7" r="11.6"/><circle cx="928.4" cy="588.0" r="11.6"/><circle cx="845.2" cy="588.0" r="11.6"/><circle cx="970.0" cy="588.0" r="11.6"/><circle cx="803.6" cy="588.0" r="11.6"/><circle cx="920.5" cy="656.3" r="11.6"/><circle cx="853.1" cy="656.3" r="11.6"/><circle cx="928.4" cy="563.6" r="11.6"/><circle cx="845.2" cy="563.6" r="11.6"/><circle cx="920.5" cy="631.8" r="11.6"/><circle cx="853.1" cy="631.8" r="11.6"/><circle cx="962.1" cy="631.8" r="11.6"/><circle cx="811.5" cy="631.8" r="11.6"/><circle cx="928.4" cy="539.1" r="11.6"/><circle cx="845.2" cy="539.1" r="11.6"/><circle cx="907.6" cy="599.2" r="11.6"/><circle cx="866.0" cy="599.2" r="11.6"/><circle cx="949.2" cy="599.2" r="11.6"/><circle cx="824.4" cy="599.2" r="11.6"/><circle cx="941.3" cy="667.4" r="11.6"/><circle cx="832.3" cy="667.4" r="11.6"/><circle cx="907.6" cy="574.7" r="11.6"/><circle cx="866.0" cy="574.7" r="11.6"/><circle cx="941.3" cy="643.0" r="11.6"/><circle cx="832.3" cy="643.0" r="11.6"/><circle cx="907.6" cy="550.3" r="11.6"/><circle cx="866.0" cy="550.3" r="11.6"/><circle cx="907.6" cy="525.8" r="11.6"/><circle cx="866.0" cy="525.8" r="11.6"/><circle cx="886.8" cy="708.1" r="11.6"/><circle cx="886.8" cy="683.7" r="11.6"/><circle cx="886.8" cy="659.2" r="11.6"/><circle cx="962.1" cy="566.5" r="11.6"/><circle cx="811.5" cy="566.5" r="11.6"/><circle cx="886.8" cy="634.8" r="11.6"/><circle cx="886.8" cy="610.3" r="11.6"/><circle cx="928.4" cy="610.3" r="11.6"/><circle cx="845.2" cy="610.3" r="11.6"/><circle cx="970.0" cy="610.3" r="11.6"/><circle cx="803.6" cy="610.3" r="11.6"/><circle cx="886.8" cy="585.8" r="11.6"/><circle cx="962.1" cy="654.1" r="11.6"/><circle cx="811.5" cy="654.1" r="11.6"/><circle cx="886.8" cy="561.4" r="11.6"/><circle cx="886.8" cy="536.9" r="11.6"/><circle cx="886.8" cy="512.5" r="11.6"/><circle cx="907.6" cy="694.8" r="11.6"/><circle cx="866.0" cy="694.8" r="11.6"/><circle cx="907.6" cy="670.3" r="11.6"/><circle cx="866.0" cy="670.3" r="11.6"/><circle cx="941.3" cy="577.6" r="11.6"/><circle cx="832.3" cy="577.6" r="11.6"/><circle cx="907.6" cy="645.9" r="11.6"/><circle cx="866.0" cy="645.9" r="11.6"/><circle cx="941.3" cy="553.2" r="11.6"/><circle cx="832.3" cy="553.2" r="11.6"/><circle cx="907.6" cy="621.4" r="11.6"/><circle cx="866.0" cy="621.4" r="11.6"/><circle cx="949.2" cy="621.4" r="11.6"/><circle cx="824.4" cy="621.4" r="11.6"/><circle cx="928.4" cy="681.5" r="11.6"/><circle cx="845.2" cy="681.5" r="11.6"/><circle cx="920.5" cy="588.8" r="11.6"/><circle cx="853.1" cy="588.8" r="11.6"/><circle cx="962.1" cy="588.8" r="11.6"/><circle cx="811.5" cy="588.8" r="11.6"/><circle cx="928.4" cy="657.0" r="11.6"/><circle cx="845.2" cy="657.0" r="11.6"/><circle cx="920.5" cy="564.3" r="11.6"/><circle cx="853.1" cy="564.3" r="11.6"/><circle cx="928.4" cy="632.6" r="11.6"/><circle cx="845.2" cy="632.6" r="11.6"/><circle cx="970.0" cy="632.6" r="11.6"/><circle cx="803.6" cy="632.6" r="11.6"/><circle cx="920.5" cy="539.9" r="11.6"/><circle cx="853.1" cy="539.9" r="11.6"/><circle cx="899.7" cy="599.9" r="11.6"/><circle cx="873.9" cy="599.9" r="11.6"/><circle cx="941.3" cy="599.9" r="11.6"/><circle cx="832.3" cy="599.9" r="11.6"/><circle cx="949.2" cy="668.2" r="11.6"/><circle cx="824.4" cy="668.2" r="11.6"/><circle cx="899.7" cy="575.4" r="11.6"/><circle cx="873.9" cy="575.4" r="11.6"/><circle cx="949.2" cy="643.7" r="11.6"/><circle cx="824.4" cy="643.7" r="11.6"/><circle cx="886.8" cy="695.2" r="11.6"/><circle cx="899.7" cy="551.0" r="11.6"/><circle cx="873.9" cy="551.0" r="11.6"/><circle cx="886.8" cy="670.8" r="11.6"/><circle cx="899.7" cy="526.5" r="11.6"/><circle cx="873.9" cy="526.5" r="11.6"/><circle cx="886.8" cy="646.3" r="11.6"/><circle cx="886.8" cy="621.9" r="11.6"/><circle cx="954.1" cy="567.2" r="11.6"/><circle cx="819.5" cy="567.2" r="11.6"/><circle cx="920.5" cy="611.0" r="11.6"/><circle cx="853.1" cy="611.0" r="11.6"/><circle cx="962.1" cy="611.0" r="11.6"/><circle cx="811.5" cy="611.0" r="11.6"/><circle cx="970.0" cy="654.8" r="11.6"/><circle cx="803.6" cy="654.8" r="11.6"/><circle cx="907.6" cy="681.9" r="11.6"/><circle cx="866.0" cy="681.9" r="11.6"/><circle cx="907.6" cy="657.5" r="11.6"/><circle cx="866.0" cy="657.5" r="11.6"/><circle cx="907.6" cy="633.0" r="11.6"/><circle cx="866.0" cy="633.0" r="11.6"/><circle cx="933.3" cy="578.4" r="11.6"/><circle cx="840.3" cy="578.4" r="11.6"/><circle cx="933.3" cy="553.9" r="11.6"/><circle cx="840.3" cy="553.9" r="11.6"/><circle cx="941.3" cy="622.2" r="11.6"/><circle cx="832.3" cy="622.2" r="11.6"/><circle cx="928.4" cy="668.6" r="11.6"/><circle cx="845.2" cy="668.6" r="11.6"/><circle cx="928.4" cy="644.2" r="11.6"/><circle cx="845.2" cy="644.2" r="11.6"/><circle cx="912.5" cy="589.5" r="11.6"/><circle cx="861.1" cy="589.5" r="11.6"/><circle cx="886.8" cy="589.5" r="11.6"/><circle cx="954.1" cy="589.5" r="11.6"/><circle cx="819.5" cy="589.5" r="11.6"/><circle cx="912.5" cy="565.0" r="11.6"/><circle cx="861.1" cy="565.0" r="11.6"/><circle cx="886.8" cy="565.0" r="11.6"/><circle cx="962.1" cy="633.3" r="11.6"/><circle cx="811.5" cy="633.3" r="11.6"/><circle cx="912.5" cy="540.6" r="11.6"/><circle cx="861.1" cy="540.6" r="11.6"/><circle cx="886.8" cy="540.6" r="11.6"/><circle cx="899.7" cy="611.5" r="11.6"/><circle cx="873.9" cy="611.5" r="11.6"/><circle cx="949.2" cy="655.3" r="11.6"/><circle cx="824.4" cy="655.3" r="11.6"/><circle cx="886.8" cy="682.4" r="11.6"/><circle cx="886.8" cy="657.9" r="11.6"/><circle cx="933.3" cy="600.6" r="11.6"/><circle cx="840.3" cy="600.6" r="11.6"/><circle cx="886.8" cy="633.5" r="11.6"/><circle cx="920.5" cy="622.6" r="11.6"/><circle cx="853.1" cy="622.6" r="11.6"/><circle cx="946.2" cy="568.0" r="11.6"/><circle cx="827.4" cy="568.0" r="11.6"/><circle cx="907.6" cy="669.1" r="11.6"/><circle cx="866.0" cy="669.1" r="11.6"/><circle cx="954.1" cy="611.8" r="11.6"/><circle cx="819.5" cy="611.8" r="11.6"/><circle cx="907.6" cy="644.6" r="11.6"/><circle cx="866.0" cy="644.6" r="11.6"/><circle cx="941.3" cy="633.8" r="11.6"/><circle cx="832.3" cy="633.8" r="11.6"/><circle cx="925.4" cy="579.1" r="11.6"/><circle cx="848.2" cy="579.1" r="11.6"/><circle cx="873.9" cy="579.1" r="11.6"/><circle cx="899.7" cy="579.1" r="11.6"/><circle cx="925.4" cy="554.6" r="11.6"/><circle cx="848.2" cy="554.6" r="11.6"/><circle cx="873.9" cy="554.6" r="11.6"/><circle cx="899.7" cy="554.6" r="11.6"/><circle cx="928.4" cy="655.8" r="11.6"/><circle cx="845.2" cy="655.8" r="11.6"/><circle cx="912.5" cy="601.1" r="11.6"/><circle cx="861.1" cy="601.1" r="11.6"/><circle cx="886.8" cy="601.1" r="11.6"/><circle cx="946.2" cy="590.2" r="11.6"/><circle cx="827.4" cy="590.2" r="11.6"/><circle cx="899.7" cy="623.1" r="11.6"/><circle cx="873.9" cy="623.1" r="11.6"/><circle cx="886.8" cy="669.5" r="11.6"/><circle cx="933.3" cy="612.2" r="11.6"/><circle cx="840.3" cy="612.2" r="11.6"/><circle cx="886.8" cy="645.1" r="11.6"/><circle cx="920.5" cy="634.2" r="11.6"/><circle cx="853.1" cy="634.2" r="11.6"/><circle cx="907.6" cy="656.2" r="11.6"/><circle cx="866.0" cy="656.2" r="11.6"/><circle cx="938.2" cy="568.7" r="11.6"/><circle cx="835.4" cy="568.7" r="11.6"/><circle cx="861.1" cy="568.7" r="11.6"/><circle cx="886.8" cy="568.7" r="11.6"/><circle cx="912.5" cy="568.7" r="11.6"/><circle cx="925.4" cy="590.7" r="11.6"/><circle cx="848.2" cy="590.7" r="11.6"/><circle cx="873.9" cy="590.7" r="11.6"/><circle cx="899.7" cy="590.7" r="11.6"/><circle cx="912.5" cy="612.7" r="11.6"/><circle cx="861.1" cy="612.7" r="11.6"/><circle cx="886.8" cy="612.7" r="11.6"/><circle cx="899.7" cy="634.7" r="11.6"/><circle cx="873.9" cy="634.7" r="11.6"/><circle cx="886.8" cy="656.7" r="11.6"/></svg>
<svg style="left:1320px;top:255px" width="30" height="30"><g transform="rotate(30 10.5 11)"><g transform="translate(10.5,11)" fill="#b6b6b6"><circle r="3.3"/><rect x="-1.05" y="-4.6" width="2.1" height="9.2" rx=".4" transform="rotate(0)"/><rect x="-1.05" y="-4.6" width="2.1" height="9.2" rx=".4" transform="rotate(60)"/><rect x="-1.05" y="-4.6" width="2.1" height="9.2" rx=".4" transform="rotate(120)"/><circle r="1.4" fill="#3d3d3d"/></g></g><g transform="translate(18.2,19)" fill="#b6b6b6"><circle r="5"/><rect x="-1.55" y="-6.8" width="3.1" height="13.6" rx=".4" transform="rotate(0)"/><rect x="-1.55" y="-6.8" width="3.1" height="13.6" rx=".4" transform="rotate(60)"/><rect x="-1.55" y="-6.8" width="3.1" height="13.6" rx=".4" transform="rotate(120)"/><circle r="2" fill="#3d3d3d"/></g></svg>
<div class="t" style="left:95.1px;top:743.3px;font-size:14.5px;color:#e6e6e6;letter-spacing:-0.278px;">Simple</div>
<div class="a" style="left:144.2px;top:741.2px;width:38.60000000000002px;height:17.799999999999955px;background:#5a5a5a;border-radius:9px"></div>
<div class="a" style="left:146.500px;top:744.200px;width:11.400px;height:11.400px;border-radius:50%;background:#151515"></div>
<div class="t" style="left:211.7px;top:743.3px;font-size:14.5px;color:#e6e6e6;">0</div>
<div class="a" style="left:232.8px;top:743px;width:16.399999999999977px;height:16px;background:#e8e8e8;border-radius:1px"></div>
<div class="t" style="left:234.6px;top:747.2px;font-size:10.5px;color:#222;font-weight:700;font-family:'Liberation Mono',monospace;">$_</div>
<div class="t" style="left:259.9px;top:743.3px;font-size:14.5px;color:#e6e6e6;">2</div>
<svg style="left:279px;top:741.400px" width="18" height="18" viewBox="0 0 24 24"><path fill="#e0e0e0" d="M15 9H9v6h6V9zm-2 4h-2v-2h2v2zm8-2V9h-2V7c0-1.100-.900-2-2-2h-2V3h-2v2h-2V3H9v2H7c-1.100 0-2 .900-2 2v2H3v2h2v2H3v2h2v2c0 1.100.900 2 2 2h2v2h2v-2h2v2h2v-2h2c1.100 0 2-.900 2-2v-2h2v-2h-2v-2h2zm-4 6H7V7h10v10z"/></svg>
<div class="t" style="left:316.7px;top:743.3px;font-size:14.5px;color:#e6e6e6;letter-spacing:0.167px;">Python (Pyodide) | Idle</div>
<div class="t" style="left:835.1px;top:743.3px;font-size:14.5px;color:#e6e6e6;letter-spacing:0.111px;">Mode: Command</div>
<svg style="left:968px;top:740px" width="19" height="19" viewBox="0 0 24 24"><path fill="none" stroke="#e4e4e4" stroke-width="2" stroke-linejoin="round" d="M12 2.400 C9 4.100 6.200 4.700 3.200 4.900 V11.500 C3.200 16.500 7 20.400 12 21.800 C17 20.400 20.800 16.500 20.800 11.500 V4.900 C17.800 4.700 15 4.100 12 2.400 Z"/><path d="M8.400 7.800 L15.600 15 M15.600 7.800 L8.400 15" stroke="#e4e4e4" stroke-width="2" fill="none"/></svg>
<div class="t" style="left:1005.6px;top:743.3px;font-size:14.5px;color:#e6e6e6;letter-spacing:-0.337px;">Ln 1, Col 1</div>
<div class="t" style="left:1090.1px;top:743.3px;font-size:14.5px;color:#e6e6e6;letter-spacing:0.271px;">create_cluster_specific_shape.ipynb</div>
</body></html>
